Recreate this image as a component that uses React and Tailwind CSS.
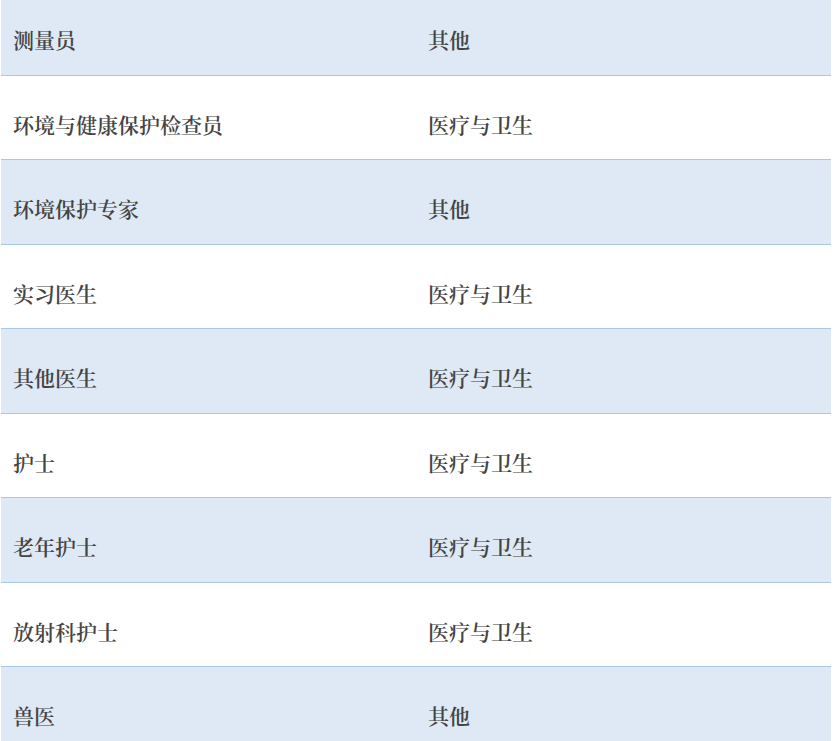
export default function App() {
  const rows = [
    ["测量员", "其他"],
    ["环境与健康保护检查员", "医疗与卫生"],
    ["环境保护专家", "其他"],
    ["实习医生", "医疗与卫生"],
    ["其他医生", "医疗与卫生"],
    ["护士", "医疗与卫生"],
    ["老年护士", "医疗与卫生"],
    ["放射科护士", "医疗与卫生"],
    ["兽医", "其他"],
  ];
  return (
    <div className="w-[836px] h-[741px] overflow-hidden bg-white">
      <div
        className="ml-[1px] w-[830px] -mt-[9px] text-[21px] font-semibold text-[#444]"
        style={{ fontFamily: '"Noto Serif CJK SC", "Noto Sans CJK SC", serif' }}
      >
        {rows.map((r, i) => (
          <div
            key={i}
            className={`grid grid-cols-2 h-[84.5px] border-b border-[#a9c8e6] ${
              i % 2 === 0 ? "bg-[#dee9f5]" : "bg-white"
            }`}
          >
            <div className="pl-[12px] pt-[33px] leading-[30px]">{r[0]}</div>
            <div className="pl-[12px] pt-[33px] leading-[30px]">{r[1]}</div>
          </div>
        ))}
      </div>
    </div>
  );
}
